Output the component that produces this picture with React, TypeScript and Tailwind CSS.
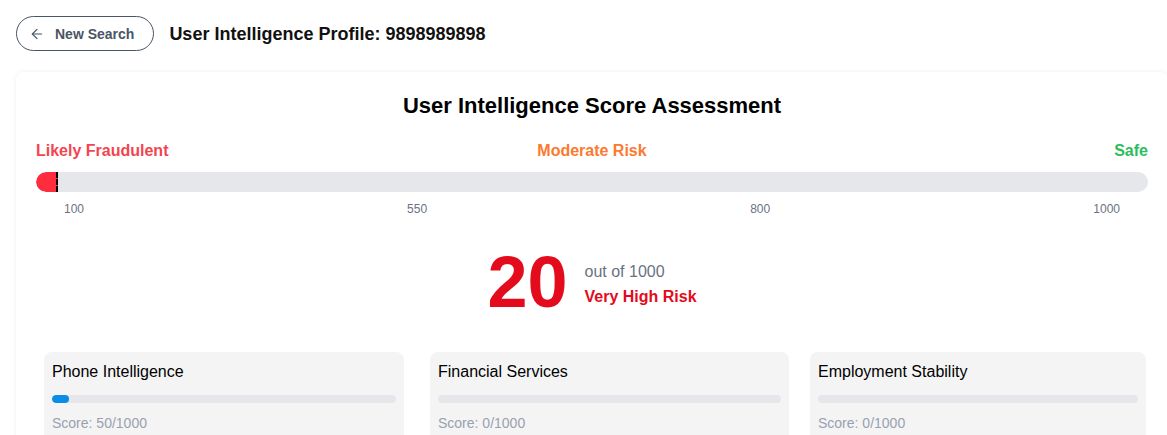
import React from 'react';
import { ArrowLeft } from 'lucide-react';

const categories = [
  { name: 'Phone Intelligence', score: 50, box: 'ml-2 w-[360px]' },
  { name: 'Financial Services', score: 0, box: 'ml-[26px] w-[359px]' },
  { name: 'Employment Stability', score: 0, box: 'ml-[21px] w-[336px]' },
];

export default function App() {
  const score = 20;
  return (
    <div className="h-[435px] w-full overflow-hidden bg-white p-4 font-['Liberation_Sans',Arial,sans-serif]">
      {/* Header */}
      <div className="flex items-center gap-[15px]">
        <button className="flex h-[35px] items-center gap-2.5 rounded-full border border-gray-600 pl-3 pr-[19px] text-sm font-bold text-gray-600">
          <ArrowLeft size={16} strokeWidth={1.75} />
          New Search
        </button>
        <h1 className="text-lg font-bold text-[#111]">User Intelligence Profile: 9898989898</h1>
      </div>

      {/* Score assessment card */}
      <div className="mt-[21px] w-[1152px] rounded-lg bg-white px-5 pt-5 pb-6 shadow-[0_0_5px_rgba(0,0,0,0.07)]">
        <h2 className="text-center text-[22px] leading-7 font-bold text-black">User Intelligence Score Assessment</h2>

        <div className="mt-[19px] grid grid-cols-3 text-base font-bold">
          <span className="text-[#f3454f]">Likely Fraudulent</span>
          <span className="text-center text-[#fb7a30]">Moderate Risk</span>
          <span className="text-right text-[#2ebd5c]">Safe</span>
        </div>

        <div className="mt-[9px] h-5 w-full overflow-hidden rounded-full bg-[#e5e7eb]">
          <div
            className="h-full rounded-l-full border-r-2 border-dashed border-black bg-[#fe2c3d]"
            style={{ width: `${(score / 1000) * 100}%` }}
          />
        </div>

        <div className="mt-[9px] flex justify-between px-7 text-xs text-gray-500">
          <span>100</span>
          <span>550</span>
          <span>800</span>
          <span>1000</span>
        </div>

        <div className="mt-[29px] flex items-center justify-center gap-[17px]">
          <span className="text-7xl leading-none font-bold text-[#e30b1c]">{score}</span>
          <div className="flex flex-col pt-1">
            <span className="text-base text-gray-500">out of 1000</span>
            <span className="mt-px text-base font-bold text-[#e30b1c]">Very High Risk</span>
          </div>
        </div>

        <div className="mt-[34px] flex">
          {categories.map((c) => (
            <div key={c.name} className={`${c.box} rounded-lg bg-[#f4f4f5] px-2 pt-2 pb-5`}>
              <div className="text-base text-black">{c.name}</div>
              <div className="mt-[11px] h-2 w-full overflow-hidden rounded-full bg-[#e5e7eb]">
                <div className="h-full rounded-full bg-[#0b8de5]" style={{ width: `${(c.score / 1000) * 100}%` }} />
              </div>
              <div className="mt-2.5 text-sm text-gray-400">Score: {c.score}/1000</div>
            </div>
          ))}
        </div>
      </div>
    </div>
  );
}
